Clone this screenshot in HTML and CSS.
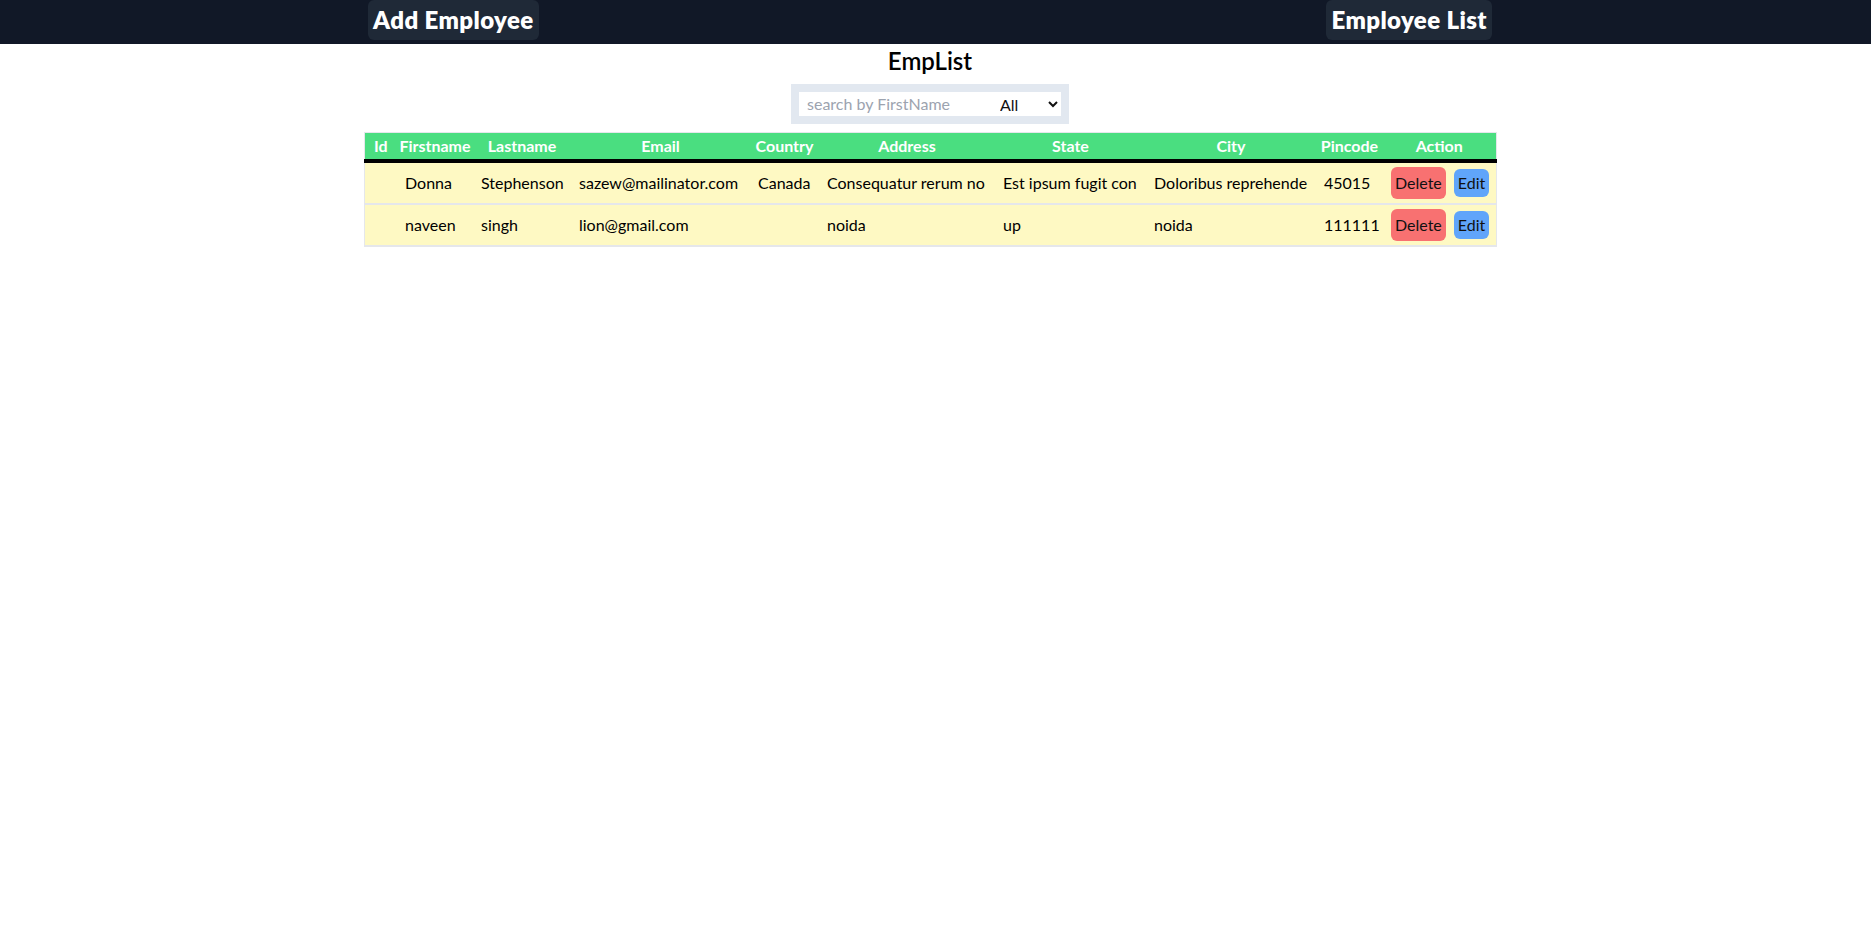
FILE: index.html
```html
<!DOCTYPE html>
<html lang="en">
<head>
<meta charset="utf-8">
<title>EmpList</title>
<link rel="stylesheet" href="styles.css">
</head>
<body>
<nav class="topbar">
  <div class="frame">
    <div class="topbar-inner">
      <a class="nav-btn" href="#">Add Employee</a>
      <a class="nav-btn" href="#">Employee List</a>
    </div>
  </div>
</nav>
<main class="frame">
  <h1 class="title">EmpList</h1>
  <div class="search">
    <input class="search-input" type="text" placeholder="search by FirstName">
    <select class="search-select"><option>All</option></select>
  </div>
  <table class="emp-table">
    <colgroup>
      <col class="c-id"><col class="c-first"><col class="c-last"><col class="c-email"><col class="c-country"><col class="c-address"><col class="c-state"><col class="c-city"><col class="c-pin"><col class="c-action">
    </colgroup>
    <thead>
      <tr>
        <th>Id</th><th>Firstname</th><th>Lastname</th><th>Email</th><th>Country</th><th>Address</th><th>State</th><th>City</th><th>Pincode</th><th>Action</th>
      </tr>
    </thead>
    <tbody>
      <tr>
        <td></td><td>Donna</td><td>Stephenson</td><td>sazew@mailinator.com</td><td>Canada</td><td>Consequatur rerum no</td><td>Est ipsum fugit con</td><td>Doloribus reprehende</td><td>45015</td>
        <td><div class="actions"><button class="btn btn-delete">Delete</button><button class="btn btn-edit">Edit</button></div></td>
      </tr>
      <tr>
        <td></td><td>naveen</td><td>singh</td><td>lion@gmail.com</td><td></td><td>noida</td><td>up</td><td>noida</td><td>111111</td>
        <td><div class="actions"><button class="btn btn-delete">Delete</button><button class="btn btn-edit">Edit</button></div></td>
      </tr>
    </tbody>
  </table>
</main>
</body>
</html>
```
FILE: styles.css
```css
* { box-sizing: border-box; }
body {
  margin: 0;
  font-family: Lato, "Noto Sans", "Liberation Sans", sans-serif;
  font-size: 16px;
  line-height: 24px;
  color: #000;
  background: #fff;
}
.frame { width: 1860px; }
.topbar {
  background: #111827;
  padding-bottom: 4px;
}
.topbar-inner {
  width: 1124px;
  margin: 0 auto;
  display: flex;
  justify-content: space-between;
}
.nav-btn {
  display: block;
  background: #1f2937;
  color: #fff;
  text-decoration: none;
  font-size: 24px;
  line-height: 32px;
  font-weight: 800;
  letter-spacing: 0.4px;
  padding: 4px 5px;
  border-radius: 6px;
}
.title {
  margin: 0;
  padding-top: 1px;
  text-align: center;
  font-size: 24px;
  line-height: 32px;
  font-weight: 600;
}
.search {
  display: flex;
  width: max-content;
  margin: 7px auto 0;
  padding: 8px;
  background: #e2e8f0;
}
.search-input {
  width: 197px;
  height: 24px;
  border: none;
  outline: none;
  padding: 0 8px;
  font: inherit;
  color: #111827;
  background: #fff;
}
.search-input::placeholder { color: #9ca3af; }
.search-select {
  width: 65px;
  height: 24px;
  border: none;
  border-radius: 0;
  padding: 0;
  font: inherit;
  color: #111;
  background: #fff;
}
.emp-table {
  width: 1132px;
  margin: 8px auto 0;
  table-layout: fixed;
  border-collapse: collapse;
  border: 1px solid #e5e7eb;
}
.c-id { width: 33px; }
.c-first { width: 76px; }
.c-last { width: 98px; }
.c-email { width: 179px; }
.c-country { width: 69px; }
.c-address { width: 176px; }
.c-state { width: 151px; }
.c-city { width: 170px; }
.c-pin { width: 67px; }
.c-action { width: 113px; }
.emp-table th {
  background: #4ade80;
  color: #fff;
  font-weight: 700;
  padding: 1px 0;
  line-height: 24px;
  border-bottom: 4px solid #000;
  white-space: nowrap;
  text-align: center;
}
.emp-table td {
  background: #fef9c3;
  padding: 4px 8px;
  line-height: 24px;
  border-bottom: 2px solid #e5e7eb;
  white-space: nowrap;
  overflow: hidden;
  text-align: left;
}
.actions {
  display: flex;
  align-items: center;
  gap: 8px;
}
.btn {
  font: inherit;
  line-height: 24px;
  color: #111;
  border: none;
  border-radius: 6px;
  cursor: pointer;
}
.btn-delete { background: #f87171; padding: 4px; }
.btn-edit { background: #60a5fa; padding: 2px 4px; }
```
